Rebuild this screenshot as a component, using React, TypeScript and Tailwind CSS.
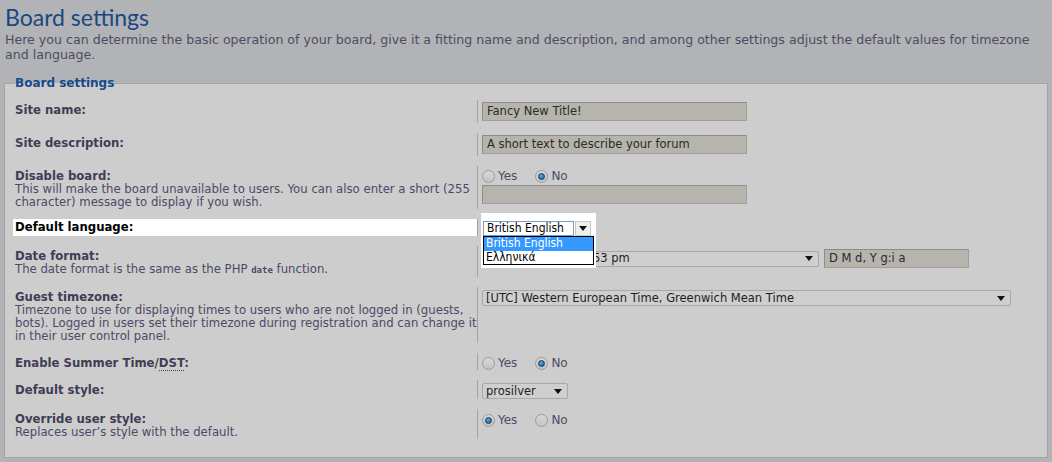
import React from "react";

interface RowProps {
  label: React.ReactNode;
  desc?: React.ReactNode;
  highlight?: boolean;
  ddClass?: string;
  children?: React.ReactNode;
}

function Arrow() {
  return (
    <svg width="8" height="5" viewBox="0 0 8 5" className="shrink-0">
      <polygon points="0,0 8,0 4,5" fill="#111" />
    </svg>
  );
}

function Radio({ checked, label }: { checked?: boolean; label: string }) {
  return (
    <span className="flex items-center mr-[18px]">
      <span className="w-[13px] h-[13px] rounded-full border border-[#9b9b9b] bg-gradient-to-b from-[#d8d8d8] to-[#c4c4c4] flex items-center justify-center">
        {checked && <span className="w-[7px] h-[7px] rounded-full bg-[radial-gradient(circle_at_40%_35%,#5fa8db,#12578f)] border border-[#0e3f66]" />}
      </span>
      <span className="ml-[3px] text-[12px] text-[#4c4a66]">{label}</span>
    </span>
  );
}

function TextBox({ value, w }: { value?: string; w: string }) {
  return (
    <div className={`${w} h-[19px] bg-[#b7b4ad] border border-[#a2a09a] border-t-[#8c8c8c] border-l-[#8c8c8c] pl-[4px] text-[11.5px] leading-[17px] text-[#2a2a2a] whitespace-nowrap`}>
      {value}
    </div>
  );
}

function Select({ value, w, hidden }: { value: string; w: string; hidden?: string }) {
  return (
    <div className={`${w} h-[16px] bg-[#cfcfcf] border border-[#a8a8a8] rounded-[2px] flex items-center justify-between pl-[3px] pr-[5px] text-[11.5px] text-[#1e1e1e] overflow-hidden whitespace-nowrap`}>
      <span className="flex">
        {hidden && <span className="w-[107px] text-right">{hidden}</span>}
        <span>{value}</span>
      </span>
      <Arrow />
    </div>
  );
}

function Row({ label, desc, highlight, ddClass, children }: RowProps) {
  return (
    <div className="flex">
      <div className="w-[462px] shrink-0">
        {highlight ? (
          <div className="bg-white -ml-[2px] pl-[2px] h-[17px] pt-[2px] text-black font-bold">{label}</div>
        ) : (
          <div className="pt-[4px] font-bold text-[#3e3e55]">{label}</div>
        )}
        {desc && <div className="text-[#4c4a66]">{desc}</div>}
      </div>
      <div className={`flex-1 border-l border-[#a3a3a3] pl-[4px] ${ddClass ?? "py-[2px]"}`}>{children}</div>
    </div>
  );
}

export default function App() {
  return (
    <div className="min-h-[462px] bg-[#b1b3b7] px-[4px] pt-[2px] font-['DejaVu_Sans',sans-serif] text-[11.7px] leading-[13px]">
      <h1 className="pl-[1px] font-['Lato',sans-serif] text-[23px] leading-[30px] text-[#1a4780]">Board settings</h1>
      <p className="pl-[1px] w-[1042px] text-[12.6px] leading-[15px] text-[#4d4d5f]">
        Here you can determine the basic operation of your board, give it a fitting name and description, and among other settings adjust the default values for timezone and language.
      </p>

      <fieldset className="mt-[14px] border border-[#a5a5a5] bg-[#cdcdcd] px-[10px] pb-[18px]">
        <legend className="px-0 text-[12px] leading-[14px] font-bold text-[#154a8c]">Board settings</legend>
        <div className="flex flex-col gap-[10px] pt-[10px]">
          <Row label="Site name:">
            <TextBox w="w-[265px]" value="Fancy New Title!" />
          </Row>
          <Row label="Site description:">
            <TextBox w="w-[265px]" value="A short text to describe your forum" />
          </Row>
          <Row
            label="Disable board:"
            desc={<>This will make the board unavailable to users. You can also enter a short (255<br />character) message to display if you wish.</>}
            ddClass="pt-[3px]"
          >
            <div className="flex items-center h-[15px] mb-[1px]">
              <Radio label="Yes" />
              <Radio checked label="No" />
            </div>
            <TextBox w="w-[265px]" />
          </Row>
          <Row label="Default language:" highlight ddClass="pt-0">
            <div className="relative h-[17px]">
              <div className="absolute left-[-1px] top-[-6px] w-[115px] h-[55px] bg-white z-10">
                <div className="flex mt-[8px] ml-[2px]">
                  <div className="w-[91px] h-[15px] border border-[#7f9db9] pl-[3px] text-[12px] leading-[13px] text-black font-['DejaVu_Sans_Condensed','DejaVu_Sans',sans-serif]">
                    British English
                  </div>
                  <div className="w-[16px] h-[15px] ml-[1px] border border-[#c8c8c8] bg-[#f0f0f0] flex items-center justify-center">
                    <Arrow />
                  </div>
                </div>
                <div className="w-[111px] border border-black bg-white ml-[2px] text-[12px] leading-[13px] font-['DejaVu_Sans_Condensed','DejaVu_Sans',sans-serif]">
                  <div className="bg-[#3399ff] text-white pl-[2px] h-[14px]">British English</div>
                  <div className="text-black pl-[2px] h-[13px]">Ελληνικά</div>
                </div>
              </div>
            </div>
          </Row>
          <Row
            label="Date format:"
            desc={<>The date format is the same as the PHP <code className="font-['DejaVu_Sans_Mono',monospace] text-[9px] font-bold">date</code> function.</>}
            ddClass="pt-[3px]"
          >
            <div className="flex items-center gap-[5px]">
              <Select w="w-[337px]" hidden="Jan 16, 2012 4:" value="53 pm" />
              <TextBox w="w-[145px]" value="D M d, Y g:i a" />
            </div>
          </Row>
          <Row
            label="Guest timezone:"
            desc={<>Timezone to use for displaying times to users who are not logged in (guests,<br />bots). Logged in users set their timezone during registration and can change it<br />in their user control panel.</>}
            ddClass="pt-[3px]"
          >
            <Select w="w-[529px]" value="[UTC] Western European Time, Greenwich Mean Time" />
          </Row>
          <Row
            label={<>Enable Summer Time/<abbr className="no-underline border-b border-dotted border-[#3e3e55]">DST</abbr>:</>}
            ddClass="pt-[3px]"
          >
            <div className="flex items-center h-[14px]">
              <Radio label="Yes" />
              <Radio checked label="No" />
            </div>
          </Row>
          <Row label="Default style:" ddClass="pt-[3px]">
            <Select w="w-[86px]" value="prosilver" />
          </Row>
          <Row label="Override user style:" desc="Replaces user’s style with the default." ddClass="pt-[4px]">
            <div className="flex items-center h-[14px]">
              <Radio checked label="Yes" />
              <Radio label="No" />
            </div>
          </Row>
        </div>
      </fieldset>
    </div>
  );
}
